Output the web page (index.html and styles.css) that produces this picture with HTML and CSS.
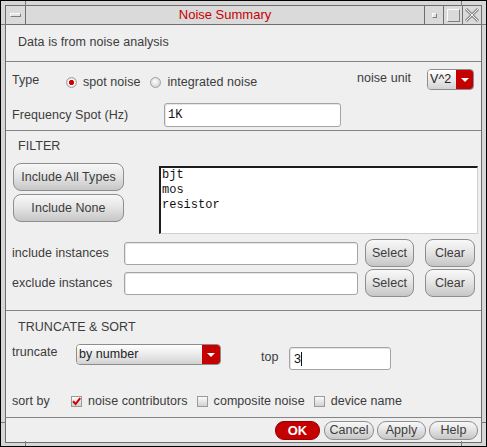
FILE: index.html
```html
<!DOCTYPE html>
<html>
<head>
<meta charset="utf-8">
<title>Noise Summary</title>
<link rel="stylesheet" href="styles.css">
</head>
<body>
<div class="win">
  <span class="tick v t-l"></span>
  <span class="tick v t-r"></span>
  <span class="tick v b-l"></span>
  <span class="tick v b-r"></span>
  <span class="tick h l-t"></span>
  <span class="tick h r-t"></span>
  <span class="tick h l-b"></span>
  <span class="tick h r-b"></span>
  <div class="inner">
    <div class="titlebar">
      <div class="tbtn menu"><span class="bar"></span></div>
      <div class="title">Noise Summary</div>
      <div class="tbtn"><span class="mini"></span></div>
      <div class="tbtn"><span class="maxi"></span></div>
      <div class="tbtn">
        <svg class="xicon" width="16" height="14" viewBox="0 0 16 14">
          <path d="M2 1 L14 13 M14 1 L2 13" stroke="#8a8a8a" stroke-width="3" fill="none"/>
          <path d="M2 1 L14 13 M14 1 L2 13" stroke="#f2f2f2" stroke-width="1" fill="none"/>
        </svg>
      </div>
    </div>
    <div class="content">
      <div class="sec s1">
        <span class="txt">Data is from noise analysis</span>
      </div>

      <div class="sec s2">
        <div class="row type-row">
          <span class="txt lbl-type">Type</span>
          <span class="radio on"></span>
          <span class="txt opt">spot noise</span>
          <span class="radio r2"></span>
          <span class="txt opt">integrated noise</span>
          <span class="grow"></span>
          <span class="txt unit-lbl">noise unit</span>
          <div class="dd dd-unit">
            <span class="dd-text">V^2</span>
            <span class="dd-arrow"><span class="tri"></span></span>
          </div>
        </div>
        <div class="row freq-row">
          <span class="txt lbl-freq">Frequency Spot (Hz)</span>
          <div class="field freq-field"><span class="mono">1K</span></div>
        </div>
      </div>

      <div class="sec s3">
        <div class="head">FILTER</div>
        <div class="row filter-row">
          <div class="btn-col">
            <div class="btn big">Include All Types</div>
            <div class="btn big">Include None</div>
          </div>
          <div class="listbox">
            <div class="li">bjt</div>
            <div class="li">mos</div>
            <div class="li">resistor</div>
          </div>
        </div>
        <div class="row inst-row first">
          <span class="txt lbl-inst">include instances</span>
          <div class="field inst-field"></div>
          <div class="btn sel">Select</div>
          <div class="btn clr">Clear</div>
        </div>
        <div class="row inst-row">
          <span class="txt lbl-inst">exclude instances</span>
          <div class="field inst-field"></div>
          <div class="btn sel">Select</div>
          <div class="btn clr">Clear</div>
        </div>
      </div>

      <div class="sec s4">
        <div class="head">TRUNCATE &amp; SORT</div>
        <div class="row trunc-row">
          <span class="txt lbl-trunc">truncate</span>
          <div class="dd dd-trunc">
            <span class="dd-text">by number</span>
            <span class="dd-arrow"><span class="tri"></span></span>
          </div>
          <span class="txt lbl-top">top</span>
          <div class="field top-field"><span class="val">3</span><span class="caret"></span></div>
        </div>
        <div class="row sort-row">
          <span class="txt lbl-sort">sort by</span>
          <span class="cb on">
            <svg width="11" height="11" viewBox="0 0 11 11"><path d="M2 5.2 L4.6 8 L9.2 2.2" stroke="#d00000" stroke-width="2" fill="none"/></svg>
          </span>
          <span class="txt opt">noise contributors</span>
          <span class="cb c2"></span>
          <span class="txt opt">composite noise</span>
          <span class="cb c3"></span>
          <span class="txt opt">device name</span>
        </div>
      </div>

      <div class="footer">
        <div class="fbtn ok">OK</div>
        <div class="fbtn cancel">Cancel</div>
        <div class="fbtn apply">Apply</div>
        <div class="fbtn help">Help</div>
      </div>
    </div>
  </div>
</div>
</body>
</html>
```

FILE: styles.css
```css
* { box-sizing: border-box; }
html, body { margin: 0; padding: 0; background: #d6d6d6; }
body {
  font-family: "Liberation Sans", Arial, sans-serif;
  font-size: 12.5px;
  letter-spacing: 0.05px;
  color: #3c3c3c;
}
.win {
  position: relative;
  width: 487px;
  height: 447px;
  border: 1px solid #000;
  background: #d6d6d6;
  padding: 4px 4px 3px 4px;
}
.tick { position: absolute; background: #7a7a7a; }
.tick.v { width: 1px; height: 5px; }
.tick.h { width: 5px; height: 1px; }
.t-l { top: 0; left: 24px; }
.t-r { top: 0; left: 460px; }
.b-l { bottom: 0; left: 24px; height: 4px; }
.b-r { bottom: 0; left: 460px; height: 4px; }
.l-t { left: 0; top: 23px; }
.r-t { right: 0; top: 23px; }
.l-b { left: 0; top: 421px; }
.r-b { right: 0; top: 421px; }

.inner {
  height: 100%;
  border: 1px solid #6e6e6e;
  display: flex;
  flex-direction: column;
}
.titlebar {
  height: 19px;
  flex: none;
  display: flex;
  background: #dadada;
  border-bottom: 1px solid #6e6e6e;
}
.tbtn {
  width: 19px;
  border-left: 1px solid #6e6e6e;
  display: flex;
  align-items: center;
  justify-content: center;
}
.tbtn.menu {
  width: 20px;
  border-left: none;
  border-right: 1px solid #6e6e6e;
}
.bar {
  width: 11px;
  height: 4px;
  background: #e4e4e4;
  border: 1px solid #7e7e7e;
  border-top-color: #fafafa;
  border-left-color: #fafafa;
}
.mini {
  width: 5px;
  height: 5px;
  border: 1px solid #7e7e7e;
  border-top-color: #fafafa;
  border-left-color: #fafafa;
  background: #e4e4e4;
}
.maxi {
  width: 13px;
  height: 13px;
  border: 1px solid #7e7e7e;
  border-top-color: #fafafa;
  border-left-color: #fafafa;
}
.title {
  flex: 1;
  text-align: center;
  color: #c80000;
  font-size: 13px;
  letter-spacing: 0;
  line-height: 18px;
}

.content {
  flex: 1;
  background: #efefef;
  display: flex;
  flex-direction: column;
}
.sec {
  flex: none;
  border-bottom: 1px solid #858585;
}
.txt { white-space: nowrap; line-height: 14px; }
.row { display: flex; }

.s1 {
  height: 37px;
  padding: 10px 0 0 12px;
}

.s2 { height: 69px; padding: 7px 7px 0 6px; }
.type-row { height: 21px; align-items: flex-start; }
.lbl-type { width: 54px; margin-top: 4px; }
.radio {
  width: 11px;
  height: 11px;
  border-radius: 50%;
  border: 1px solid #a0a0a0;
  background: radial-gradient(circle at 45% 40%, #ffffff 0, #e8e8e8 40%, #c4c4c4 100%);
  margin-top: 8px;
  flex: none;
}
.radio.on {
  background: radial-gradient(circle at 50% 50%, #d40000 0, #d40000 2.2px, #ffffff 3px, #e8e8e8 60%, #c4c4c4 100%);
}
.radio.r2 { margin-left: 10px; }
.type-row .opt { margin-left: 6px; margin-top: 6px; }
.grow { flex: 1; }
.unit-lbl { margin-top: 2px; margin-right: 16px; }
.dd {
  display: flex;
  height: 21px;
  border: 1px solid #8c8c8c;
  border-radius: 4px;
  overflow: hidden;
  flex: none;
}
.dd-text {
  flex: 1;
  background: linear-gradient(#ffffff, #e6e6e6 60%, #d2d2d2);
  padding-left: 2px;
  line-height: 19px;
  color: #222;
  white-space: nowrap;
}
.dd-arrow {
  width: 17px;
  background: #c40000;
  display: flex;
  align-items: center;
  justify-content: center;
}
.tri {
  width: 0;
  height: 0;
  border-left: 4px solid transparent;
  border-right: 4px solid transparent;
  border-top: 4px solid #fff;
}
.dd-unit { width: 47px; }

.freq-row { margin-top: 13px; align-items: center; }
.lbl-freq { width: 152px; }
.field {
  background: #fff;
  border: 1px solid #a4a4a4;
  border-radius: 3px;
  box-shadow: inset 1px 1px 0 #e6e6e6;
  flex: none;
}
.freq-field {
  width: 177px;
  height: 24px;
  padding-left: 3px;
  display: flex;
  align-items: center;
}
.mono {
  font-family: "Liberation Mono", "Courier New", monospace;
  font-size: 12px;
  letter-spacing: 0;
  color: #111;
}

.s3 { height: 180px; padding: 8px 0 0 0; }
.head { margin-left: 12px; line-height: 14px; }
.filter-row { margin-top: 10px; align-items: flex-start; }
.btn-col {
  margin-left: 7px;
  width: 111px;
  display: flex;
  flex-direction: column;
  gap: 3px;
}
.btn {
  border: 1px solid #8e8e8e;
  border-radius: 8px;
  background: linear-gradient(#f8f8f8, #e6e6e6 45%, #c6c6c6);
  display: flex;
  align-items: center;
  justify-content: center;
  white-space: nowrap;
  flex: none;
}
.btn.big { height: 28px; }
.listbox {
  margin-top: 3px;
  margin-left: 35px;
  width: 319px;
  height: 68px;
  background: #fff;
  border-top: 2px solid #1c1c1c;
  border-left: 2px solid #1c1c1c;
  border-right: 1px solid #cfcfcf;
  border-bottom: 1px solid #cfcfcf;
  font-family: "Liberation Mono", "Courier New", monospace;
  font-size: 12px;
  letter-spacing: 0;
  color: #111;
  padding-left: 1px;
}
.li { line-height: 15px; }

.inst-row { align-items: center; height: 28px; margin-top: 2px; padding-left: 6px; }
.inst-row.first { margin-top: 5px; }
.lbl-inst { width: 112px; }
.inst-field { width: 234px; height: 23px; }
.btn.sel { width: 49px; height: 28px; margin-left: 7px; }
.btn.clr { width: 50px; height: 28px; margin-left: 11px; }

.s4 { height: 107px; padding: 9px 0 0 6px; }
.s4 .head { margin-left: 6px; }
.trunc-row { margin-top: 10px; height: 26px; align-items: flex-start; }
.lbl-trunc { width: 64px; margin-top: 1px; }
.dd-trunc { width: 145px; }
.dd-trunc .dd-arrow { width: 18px; }
.lbl-top { margin-left: 40px; margin-top: 6px; width: 28px; }
.top-field {
  width: 102px;
  height: 23px;
  margin-top: 3px;
  display: flex;
  align-items: center;
  padding-left: 4px;
}
.val { color: #111; line-height: 14px; }
.caret { width: 1px; height: 14px; background: #111; }

.sort-row { margin-top: 24px; align-items: center; height: 14px; }
.lbl-sort { width: 59px; }
.cb {
  width: 11px;
  height: 11px;
  border: 1px solid #9a9a9a;
  background: linear-gradient(#fafafa, #d2d2d2);
  flex: none;
  display: flex;
}
.cb svg { margin: -1px; }
.sort-row .opt { margin-left: 6px; }
.cb.c2, .cb.c3 { margin-left: 9px; }

.footer {
  flex: 1;
  display: flex;
  justify-content: flex-end;
  align-items: flex-start;
  padding: 3px 3px 0 0;
  gap: 3px;
}
.fbtn {
  height: 19px;
  border: 1px solid #8e8e8e;
  border-radius: 9px;
  background: linear-gradient(#f8f8f8, #e4e4e4 45%, #c6c6c6);
  font-size: 12.5px;
  line-height: 17px;
  text-align: center;
  white-space: nowrap;
}
.fbtn.ok {
  width: 45px;
  background: #c40000;
  border-color: #9a0000;
  color: #fff;
  font-weight: bold;
  font-size: 13px;
  margin-right: 1px;
}
.fbtn.cancel { width: 50px; }
.fbtn.apply { width: 49px; }
.fbtn.help { width: 49px; }
```
